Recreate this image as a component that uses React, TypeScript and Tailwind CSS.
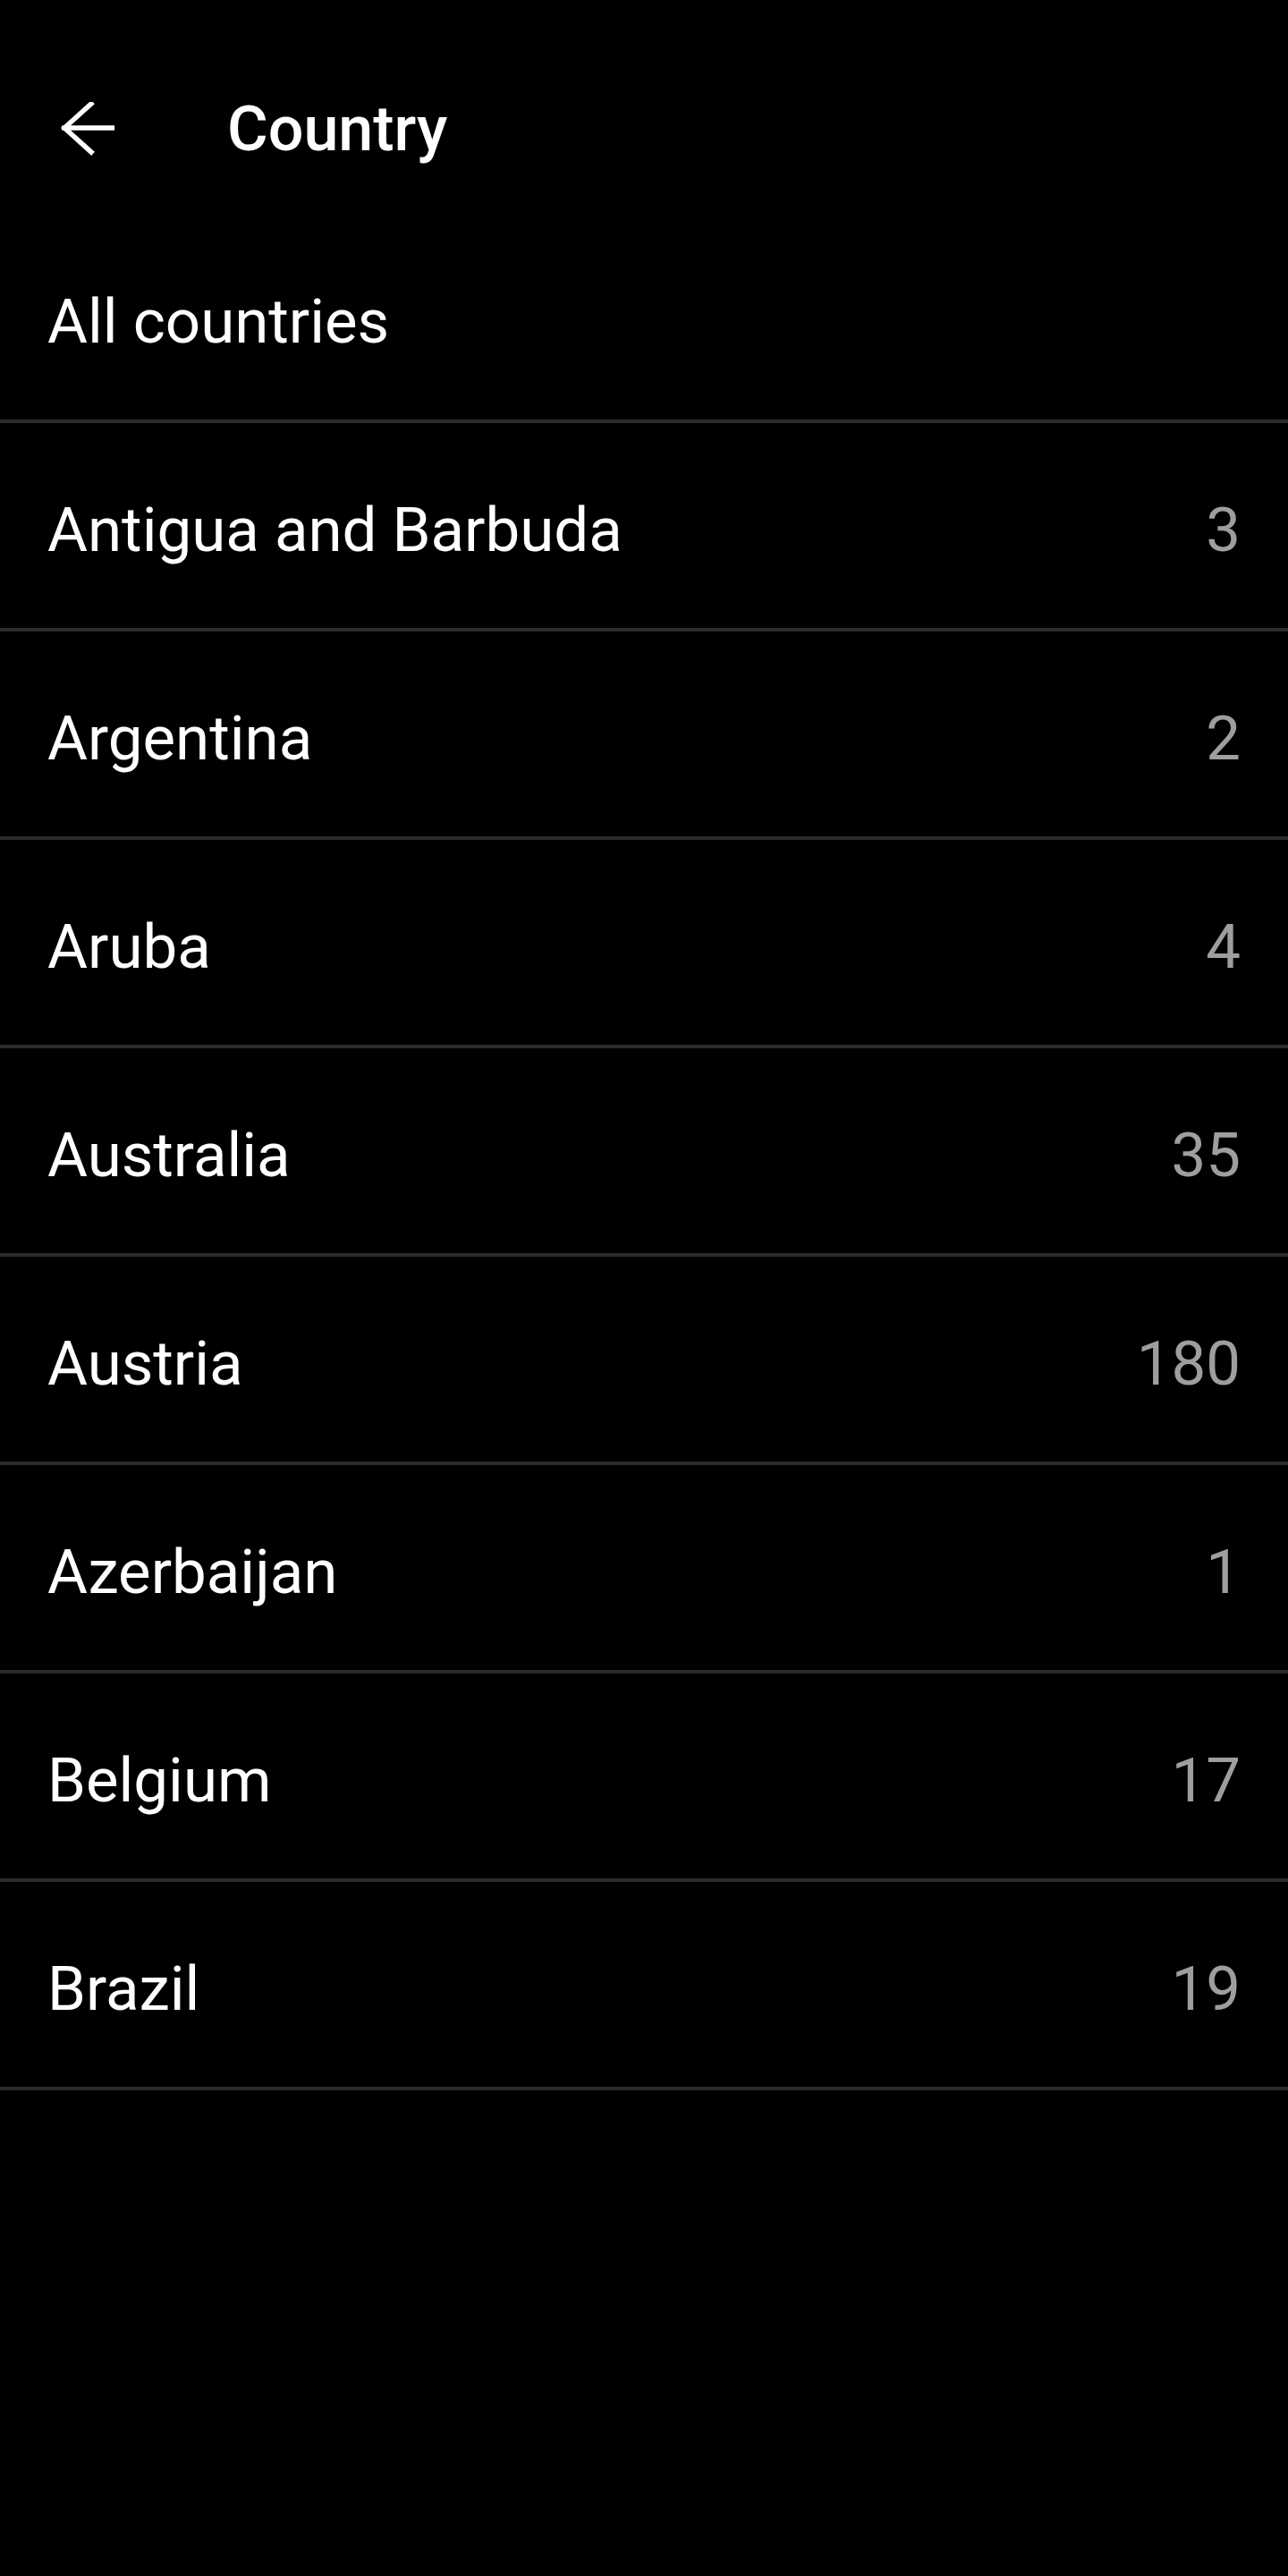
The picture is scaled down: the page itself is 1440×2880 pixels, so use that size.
const countries = [
  { name: "Antigua and Barbuda", count: 3 },
  { name: "Argentina", count: 2 },
  { name: "Aruba", count: 4 },
  { name: "Australia", count: 35 },
  { name: "Austria", count: 180 },
  { name: "Azerbaijan", count: 1 },
  { name: "Belgium", count: 17 },
  { name: "Brazil", count: 19 },
];

function BackArrow() {
  return (
    <svg width="60" height="60" viewBox="0 0 60 60" fill="none">
      <path
        d="M4 29H60M34 2L4 29L34 56"
        stroke="white"
        strokeWidth="5.5"
        strokeLinecap="square"
      />
    </svg>
  );
}

function Row({ name, count }: { name: string; count?: number }) {
  return (
    <div className="h-[233px] flex items-center justify-between pl-[53px] pr-[53px] pt-[10px] border-b-4 border-[#2b2b2b]">
      <span className="text-white text-[69px] leading-none">{name}</span>
      {count !== undefined && (
        <span className="text-[#9e9e9e] text-[69px] leading-none">{count}</span>
      )}
    </div>
  );
}

export default function App() {
  return (
    <div
      className="min-h-screen bg-black"
      style={{ fontFamily: "Roboto, 'Noto Sans', sans-serif" }}
    >
      <div className="h-[240px] flex items-center pt-[48px]">
        <button className="ml-[68px] w-[60px] h-[60px] flex items-center justify-center">
          <BackArrow />
        </button>
        <h1 className="ml-[126px] text-white text-[70px] font-medium leading-none">
          Country
        </h1>
      </div>
      <Row name="All countries" />
      {countries.map((c) => (
        <Row key={c.name} name={c.name} count={c.count} />
      ))}
    </div>
  );
}
